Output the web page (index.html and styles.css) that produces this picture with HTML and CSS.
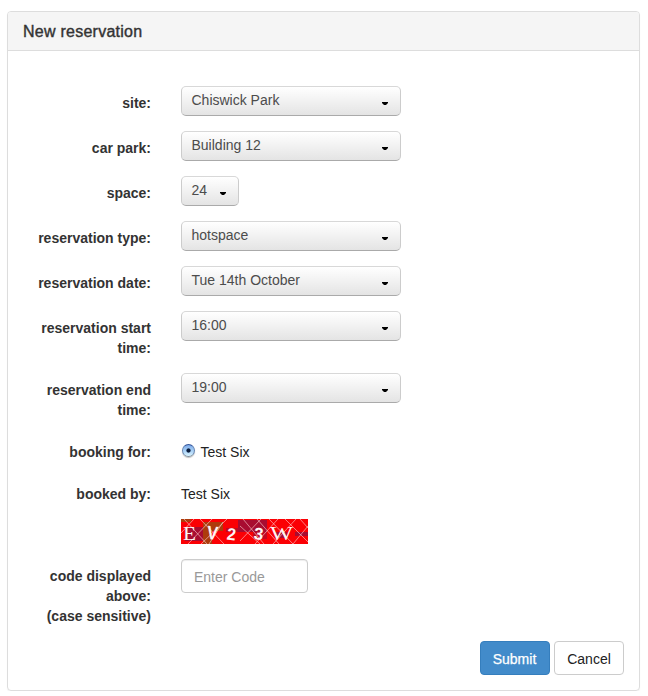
FILE: index.html
```html
<!DOCTYPE html>
<html lang="en">
<head>
<meta charset="utf-8">
<title>New reservation</title>
<link rel="stylesheet" href="styles.css">
</head>
<body>
<section class="panel">
  <header class="panel-heading"><h1>New reservation</h1></header>
  <form class="panel-body">
    <div class="row"><div class="label">site:</div><div class="select"><span>Chiswick Park</span><i class="caret"></i></div></div>
    <div class="row"><div class="label">car park:</div><div class="select"><span>Building 12</span><i class="caret"></i></div></div>
    <div class="row"><div class="label">space:</div><div class="select small"><span>24</span><i class="caret"></i></div></div>
    <div class="row"><div class="label">reservation type:</div><div class="select"><span>hotspace</span><i class="caret"></i></div></div>
    <div class="row"><div class="label">reservation date:</div><div class="select"><span>Tue 14th October</span><i class="caret"></i></div></div>
    <div class="row"><div class="label">reservation start<br>time:</div><div class="select"><span>16:00</span><i class="caret"></i></div></div>
    <div class="row"><div class="label">reservation end<br>time:</div><div class="select"><span>19:00</span><i class="caret"></i></div></div>
    <div class="row"><div class="label">booking for:</div><div class="static"><i class="radio"></i><span>Test Six</span></div></div>
    <div class="row"><div class="label">booked by:</div><div class="static"><span>Test Six</span></div></div>
    <div class="row captcha-row"><div class="label"></div>
      <svg class="captcha" width="127" height="25" viewBox="0 0 127 25">
        <rect width="127" height="25" fill="#fb0004"/>
        <path d="M4 8h24v14H4zM57 1h29v12H57zM94 13h12v6H94zM114 13h13v4h-13z" fill="#a80c31"/>
        <path d="M0 0h10v3H0zM22 3h20v9H31v13h-9z" fill="#ad3b0c"/>
        <path d="M45 9h12v4H45zM72 13h14v7H72z" fill="#c10720"/>
        <path d="M0 14L13 0M3 0L26 25M7 25L31 0M19 0L43 25M20 25L46 0M42 3L28 25M59 7L79 25M59 22L80 0M62 0L83 25M76 0L98 25M74 25L97 0M88 0L112 25M92 25L115 0M104 0L127 23M112 25L127 7M119 0L127 9" fill="none" stroke="#ffd0d2" stroke-width=".75" opacity=".8"/>
        <g fill="#fff4f4">
          <text class="serif" x="2" y="21" font-size="18" textLength="13" lengthAdjust="spacingAndGlyphs">E</text>
          <text class="hand" x="26" y="20.500" font-size="19" textLength="11" lengthAdjust="spacingAndGlyphs" transform="rotate(7 32 15)">V</text>
          <text class="hand" x="46" y="21" font-size="17" textLength="9" lengthAdjust="spacingAndGlyphs" transform="rotate(7 50 15)">2</text>
          <text class="hand" x="73" y="20.500" font-size="17" transform="rotate(7 77 15)">3</text>
          <text class="serif" x="89" y="21" font-size="18" textLength="23" lengthAdjust="spacingAndGlyphs">W</text>
        </g>
      </svg>
    </div>
    <div class="row"><div class="label">code displayed<br>above:<br>(case sensitive)</div><input class="code" type="text" placeholder="Enter Code"></div>
    <div class="actions"><button class="btn primary" type="button">Submit</button><button class="btn" type="button">Cancel</button></div>
  </form>
</section>
</body>
</html>
```
FILE: styles.css
```css
* { box-sizing: border-box; }
body {
  margin: 0;
  padding: 11px 8px 0 7px;
  background: #fff;
  color: #333;
  font: 14px/20px "Liberation Sans", Arial, sans-serif;
}
.panel {
  height: 680px;
  border: 1px solid #ddd;
  border-radius: 4px;
  box-shadow: 0 1px 1px rgba(0, 0, 0, .05);
}
.panel-heading {
  height: 39px;
  padding: 11px 15px 0;
  background: #f5f5f5;
  border-bottom: 1px solid #ddd;
  border-radius: 3px 3px 0 0;
}
h1 {
  margin: 0;
  font-size: 16px;
  line-height: 18px;
  font-weight: 400;
  letter-spacing: .25px;
  -webkit-text-stroke: .4px #333;
}
.panel-body { padding: 35px 15px 0; }
.row {
  display: flex;
  align-items: flex-start;
  margin-bottom: 15px;
}
.label {
  width: 128px;
  margin-right: 30px;
  padding-top: 7px;
  text-align: right;
  font-weight: 700;
}
.select {
  display: flex;
  justify-content: space-between;
  width: 220px;
  height: 30px;
  padding: 3px 12px 0 9.5px;
  border: 1px solid #ccc;
  border-color: #d8d8d8 #ccc #aaa;
  border-radius: 5px;
  background: linear-gradient(#fff, #e4e4e4);
  color: #4c4c4c;
}
.select.small { width: 58px; }
.caret {
  width: 6px;
  height: 3px;
  margin-top: 12px;
  background: #000;
  clip-path: polygon(0 0, 100% 0, 100% 34%, 67% 100%, 33% 100%, 0 34%);
}
.static {
  display: flex;
  padding-top: 7px;
  color: #222;
}
.radio {
  width: 13px;
  height: 13px;
  margin: 2px 6px 0 .5px;
  border: 1px solid #4a6fae;
  border-color: #33549a #6482ae #81909f;
  border-radius: 50%;
  background: radial-gradient(circle, #0b1e3d 0 1.7px, transparent 2.5px), linear-gradient(#7facea, #a6cef5 50%, #d9f4ff);
  box-shadow: 0 1px 1px rgba(0, 0, 0, .25);
}
.captcha { display: block; overflow: visible; }
.captcha-row .label { padding: 0; }
.serif { font-family: "Liberation Serif", serif; }
.hand { font-family: "Liberation Sans", sans-serif; font-weight: 700; }
.code {
  width: 127px;
  height: 34px;
  padding: 7px 12px 6px;
  border: 1px solid #ccc;
  border-radius: 4px;
  box-shadow: inset 0 1px 1px rgba(0, 0, 0, .075);
  font: inherit;
}
.code::placeholder { color: #999; opacity: 1; }
.actions {
  display: flex;
  justify-content: flex-end;
  gap: 4px;
}
.btn {
  width: 70px;
  height: 34px;
  padding: 2px 0 0;
  border: 1px solid #ccc;
  border-radius: 4px;
  background: #fff;
  color: #222;
  font: inherit;
}
.btn.primary {
  padding-right: 1px;
  border-color: #357ebd;
  background: #428bca;
  color: #fff;
  -webkit-text-stroke: .25px #fff;
}
```
